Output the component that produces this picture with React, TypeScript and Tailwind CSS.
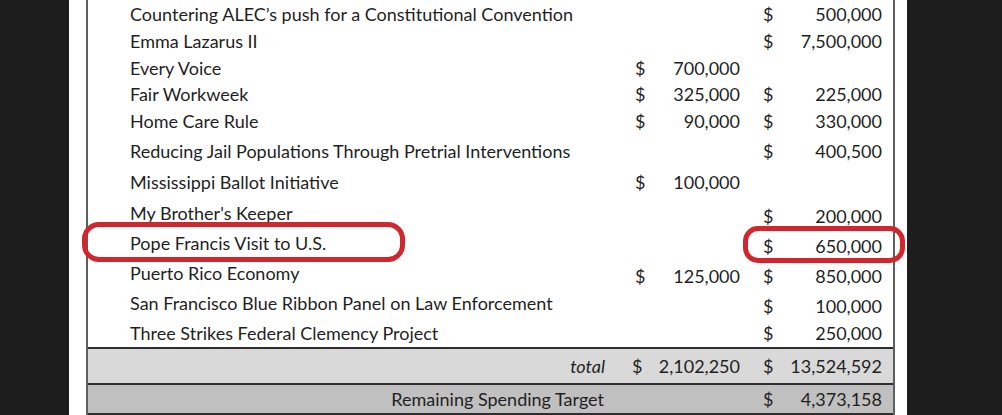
const rows: { label: string; a?: string; b?: string; h: string; low?: boolean }[] = [
  { label: "Countering ALEC\u2019s push for a Constitutional Convention", b: "500,000", h: "h-[27px]" },
  { label: "Emma Lazarus II", b: "7,500,000", h: "h-[27px]" },
  { label: "Every Voice", a: "700,000", h: "h-[27px]" },
  { label: "Fair Workweek", a: "325,000", b: "225,000", h: "h-[26px]" },
  { label: "Home Care Rule", a: "90,000", b: "330,000", h: "h-[28px]" },
  { label: "Reducing Jail Populations Through Pretrial Interventions", b: "400,500", h: "h-[31px]" },
  { label: "Mississippi Ballot Initiative", a: "100,000", h: "h-[32px]" },
  { label: "My Brother's Keeper", b: "200,000", h: "h-[30px]", low: true },
  { label: "Pope Francis Visit to U.S.", b: "650,000", h: "h-[30px]", low: true },
  { label: "Puerto Rico Economy", a: "125,000", b: "850,000", h: "h-[30px]", low: true },
  { label: "San Francisco Blue Ribbon Panel on Law Enforcement", b: "100,000", h: "h-[30px]", low: true },
  { label: "Three Strikes Federal Clemency Project", b: "250,000", h: "h-[29px]" },
];

const grid = "grid grid-cols-[505px_20px_85px_23px_20px_99px] pl-[42px] items-center";

export default function App() {
  return (
    <div className="relative w-[1002px] h-[415px] overflow-hidden bg-[#1d1d1d] flex font-['Lato',sans-serif] text-[18px] leading-[22px] text-[#1f1f1f]">
      <div className="w-[69px] shrink-0" />
      <div className="w-[838px] shrink-0 bg-white pl-[17px] pr-[12px]">
        <div className="border-x-2 border-[#5e5e5e]">
          {rows.map((r) => (
            <div key={r.label} className={`${grid} ${r.h}`}>
              <span className="whitespace-nowrap">{r.label}</span>
              <span className={r.low ? "pt-[5px]" : ""}>{r.a ? "$" : ""}</span>
              <span className={`text-right ${r.low ? "pt-[5px]" : ""}`}>{r.a ?? ""}</span>
              <span />
              <span className={r.low ? "pt-[5px]" : ""}>{r.b ? "$" : ""}</span>
              <span className={`text-right ${r.low ? "pt-[5px]" : ""}`}>{r.b ?? ""}</span>
            </div>
          ))}
          <div className={`${grid} h-[36px] bg-[#d9d9d9] border-t-2 border-[#2e2e2e]`}>
            <span className="text-right italic pr-[30px]">total</span>
            <span className="-ml-[3px]">$</span>
            <span className="text-right">2,102,250</span>
            <span />
            <span>$</span>
            <span className="text-right">13,524,592</span>
          </div>
          <div className={`${grid} h-[32px] bg-[#c0c0c0] border-y-2 border-[#2e2e2e]`}>
            <span className="text-right pr-[31px]">Remaining Spending Target</span>
            <span />
            <span />
            <span />
            <span>$</span>
            <span className="text-right">4,373,158</span>
          </div>
        </div>
      </div>
      <div className="flex-1" />

      {/* hand-drawn red markings */}
      <div className="absolute left-[82px] top-[222px] w-[323px] h-[40px] rounded-[17px] border-[5px] border-[#d0262d]" />
      <div className="absolute left-[743px] top-[226px] w-[162px] h-[37px] rounded-[15px] border-[5px] border-[#d0262d]" />
    </div>
  );
}
